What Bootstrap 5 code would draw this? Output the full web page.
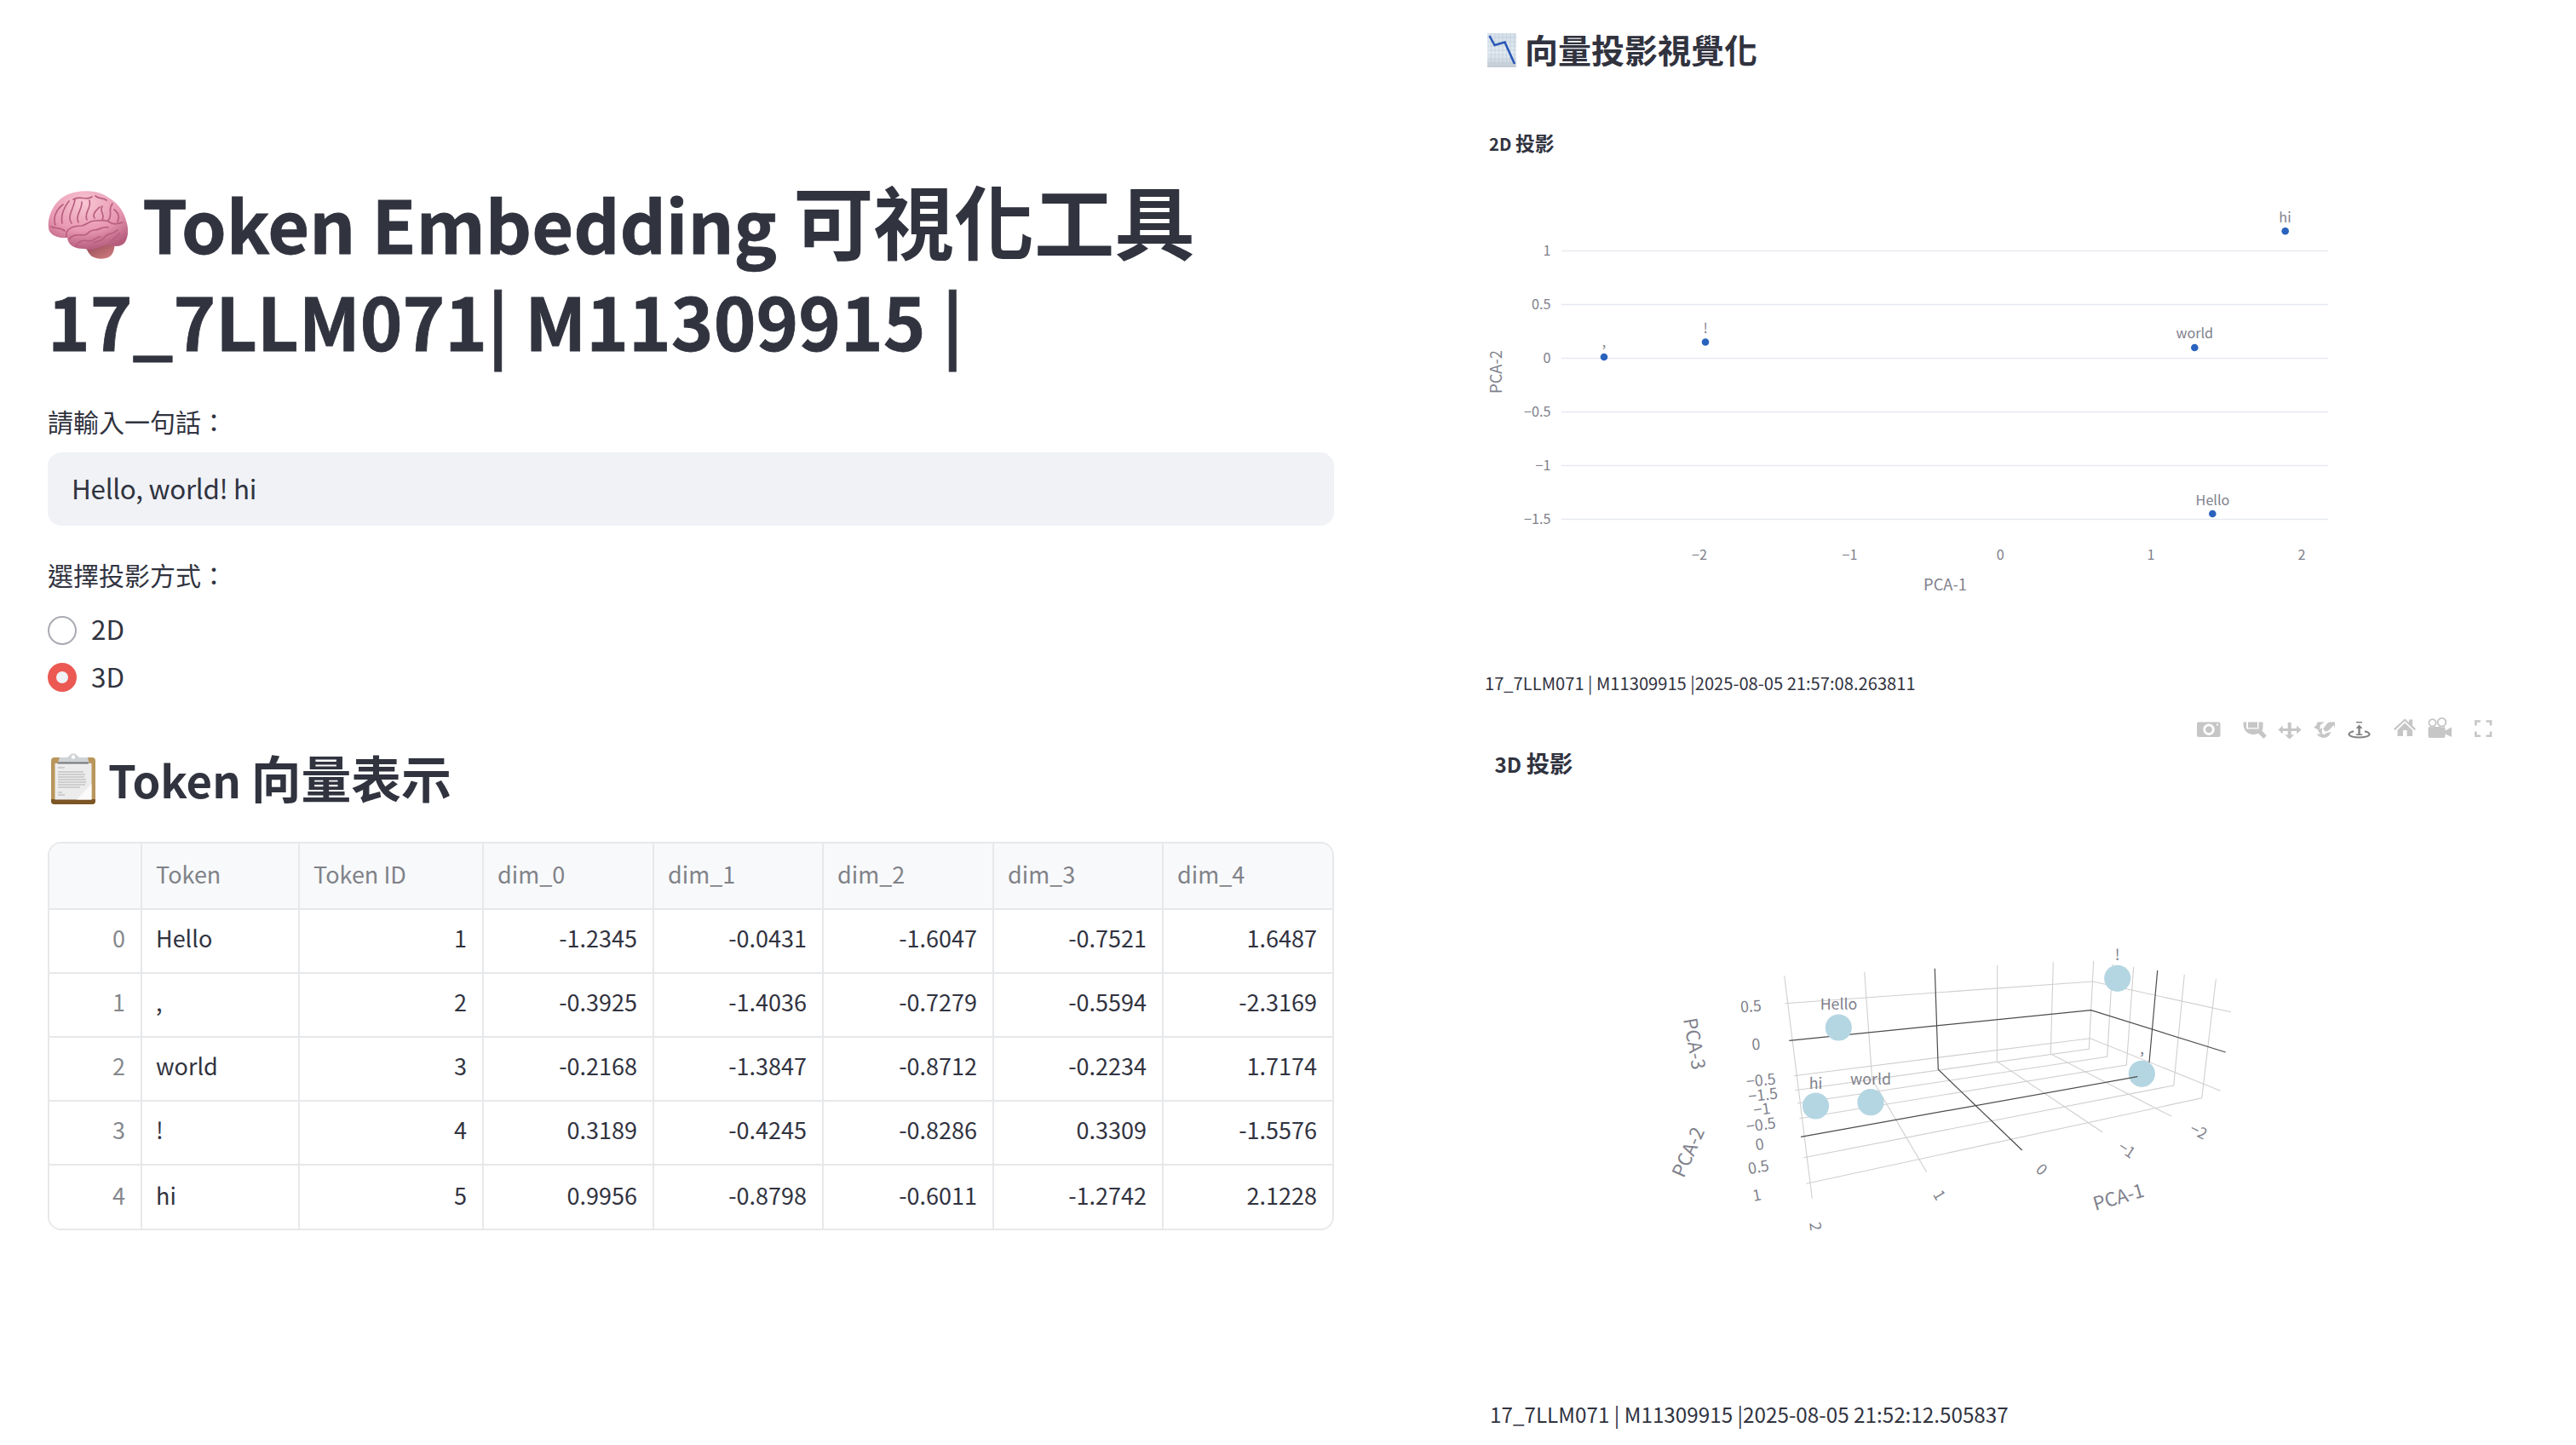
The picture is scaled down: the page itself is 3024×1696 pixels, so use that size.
<!DOCTYPE html>
<html lang="zh-Hant">
<head>
<meta charset="utf-8">
<meta name="viewport" content="width=device-width, initial-scale=1">
<title>Token Embedding 可視化工具</title>
<link href="https://cdn.jsdelivr.net/npm/bootstrap@5.3.0/dist/css/bootstrap.min.css" rel="stylesheet">
<style>
  body { font-family: "Noto Sans CJK TC", "Noto Sans", sans-serif; color: #31333f; background: #fff; overflow: hidden; }
  .page { width: 3024px; height: 1696px; }
  .pane-left { width: 1566px; padding: 204px 0 0 56px; }
  .pane-right { width: 1284px; margin-left: 174px; }
  .zh { font-size: 1.117em; line-height: 0; }
  .app-title { font-size: 84.4px; line-height: 114px; font-weight: 700; margin: 0 0 44px; white-space: nowrap; -webkit-text-stroke: .8px #31333f; }
  .app-title .zh { -webkit-text-stroke: 0; }
  .app-title svg { width: 94px; height: 80px; vertical-align: -6px; margin-right: -2px; }
  .field-label { font-size: 30px; line-height: 36px; margin: 0; display: block; }
  .text-box, .text-box:focus { height: 86px; border: 0; border-radius: 16px; background: #f0f2f6; color: #31333f; font-size: 31.4px; letter-spacing: -.3px; padding: 0 28px 4px; margin-top: 19px; }
  .choice { height: 55.6px; gap: 17px; font-size: 31.4px; line-height: 56px; }
  .choice .form-check-input { width: 34px; height: 34px; margin: 0; border: 2px solid #a9abb2; background-image: none; box-shadow: none; }
  .choice .form-check-input:checked { border: 10.5px solid #ec5953; background-color: #f0f2f6; }
  .choice span { padding-bottom: 3px; line-height: 50px; }
  .section-title { font-size: 52.6px; line-height: 70px; font-weight: 700; margin: 56px 0 0; white-space: nowrap; }
  .section-title svg { width: 60px; height: 60px; vertical-align: -7px; margin-right: -1px; }
  .frame { margin-top: 39px; width: 1510px; border: 2px solid #e7e8ea; border-radius: 16px; overflow: hidden; }
  .frame table { table-layout: fixed; width: 1506px; margin: 0; font-size: 27px; border-collapse: separate; border-spacing: 0; }
  .frame th, .frame td { height: 75.2px; line-height: 40px; padding: 0 18px 7px 16px; vertical-align: middle; font-weight: 400; border: 0 solid #e7e8ea; border-right-width: 2px; border-bottom-width: 2px; color: #31333f; background: #fff; text-align: right; }
  .frame thead th { height: 77.5px; background: #f8f9fb; color: #808288; text-align: left; padding: 0 0 4px 16px; }
  .frame tbody th { color: #85878c; }
  .frame td:nth-child(2) { text-align: left; }
  .frame tr > :last-child { border-right-width: 0; }
  .frame tbody tr:last-child > * { border-bottom-width: 0; height: 73.5px; padding-bottom: 5px; }
  .plots-title { font-size: 39px; line-height: 48px; font-weight: 700; margin: 33px 0 0 6px; gap: 10px; }
  .plots-title svg { margin-top: 3px; }
  .plot { display: block; overflow: visible; }
  .plot text { fill: #7f818c; }
  .plot .ttl { fill: #31333f; font-weight: 700; }
  .stamp { line-height: 36px; margin: 0; white-space: nowrap; }
  .modebar { height: 30px; }
</style>
</head>
<body>
<main class="page d-flex">
  <section class="pane-left flex-shrink-0">
    <h1 class="app-title"><svg viewBox="0 0 94 80"><defs><radialGradient id="br" cx=".45" cy=".2" r=".8"><stop offset="0" stop-color="#f8c6d4"/><stop offset=".6" stop-color="#e898b2"/><stop offset="1" stop-color="#b65c7c"/></radialGradient><linearGradient id="stem" x1="0" y1="0" x2="1" y2="1"><stop offset="0" stop-color="#8f4552"/><stop offset="1" stop-color="#d58083"/></linearGradient></defs><path d="M43 63c3 5 4 10 9 14 5 3 15 4 21 0 5-4 5-10 6-15z" fill="url(#stem)"/><path d="M1 44C-1 31 7 12 22 5 35-1 57-2 70 7c11 6 19 16 22 28 3 8 3 18-1 25-4 6-12 6-20 3-10 3-17 8-28 5-10 0-19-3-20-13C10 56 2 51 1 44z" fill="url(#br)"/><g fill="none" stroke="#b95f80" stroke-width="1.7" stroke-linecap="round"><path d="M22 54c-2-9 7-13 18-13 6-1 8-6 16-6 7 0 12-2 17 2 5 3 8 2 15 0M9 40c-3-9 1-18 9-24M17 38c-2-9 2-19 8-26M28 38c-6-8 3-18 4-28M36 37c-4-9 5-15 4-24M46 34c-4-9 6-13 3-23M55 32c-3-5 2-9 6-13M64 34c4-7-4-9 0-16M71 35c6-7-1-13 5-20M82 36c3-6 0-11-4-14M30 10c8-5 15 2 22-3M56 6c5 4 9 2 13 5M20 47C14 42 9 45 4 42M25 57c5-7 12-5 17-5 6 0 5-6 13-6 7 0 9-5 16-3M33 65c3-6 9-8 15-6 7 1 7-5 14-5M54 61c6-3 9-1 13-7 4-5 10-3 15-8M74 61c1-5 8-6 10-11"/></g></svg> Token Embedding <span class="zh">可視化工具</span><br>17_7LLM071| M11309915 |</h1>

    <label class="field-label" for="sentence">請輸入一句話：</label>
    <input id="sentence" class="form-control text-box" value="Hello, world! hi">

    <span class="field-label" style="margin-top:39px">選擇投影方式：</span>
    <div class="pt-3 mt-1">
      <label class="choice d-flex align-items-center"><input class="form-check-input" type="radio" name="mode"><span>2D</span></label>
      <label class="choice d-flex align-items-center"><input class="form-check-input" type="radio" name="mode" checked><span>3D</span></label>
    </div>

    <h2 class="section-title"><svg viewBox="0 0 60 60"><rect x="4" y="5" width="52" height="55" rx="4" fill="#b9965c"/><path d="M4 54h52v2q0 4-4 4H8q-4 0-4-4z" fill="#7d5526"/><path d="M8.500 12h43v42.500h-43z" fill="#ececec"/><path d="M51.500 36v18.500H34z" fill="#fafafa"/><path d="M12 17h8M12 22h30M12 25h32M12 28h31M12 31h33M12 34h33M12 37h32M12 40h26M12 46h5M12 49h8" stroke="#c3c3c3" stroke-width="1.300"/><path d="M14 5h9l5-4.500h4l5 4.500h10q1 5 2 7H12q1-5 2-7z" fill="#cfd3d6"/><path d="M12 10.500h36v2H12z" fill="#777"/><circle cx="30" cy="4.500" r="2.200" fill="#fff"/></svg> Token <span class="zh">向量表示</span></h2>

    <div class="frame">
      <table class="table">
        <colgroup><col style="width:109px"><col style="width:185px"><col style="width:216px"><col style="width:200px"><col style="width:199px"><col style="width:200px"><col style="width:199px"><col></colgroup>
        <thead><tr><th></th><th>Token</th><th>Token ID</th><th>dim_0</th><th>dim_1</th><th>dim_2</th><th>dim_3</th><th>dim_4</th></tr></thead>
        <tbody>
          <tr><th>0</th><td>Hello</td><td>1</td><td>-1.2345</td><td>-0.0431</td><td>-1.6047</td><td>-0.7521</td><td>1.6487</td></tr>
          <tr><th>1</th><td>,</td><td>2</td><td>-0.3925</td><td>-1.4036</td><td>-0.7279</td><td>-0.5594</td><td>-2.3169</td></tr>
          <tr><th>2</th><td>world</td><td>3</td><td>-0.2168</td><td>-1.3847</td><td>-0.8712</td><td>-0.2234</td><td>1.7174</td></tr>
          <tr><th>3</th><td>!</td><td>4</td><td>0.3189</td><td>-0.4245</td><td>-0.8286</td><td>0.3309</td><td>-1.5576</td></tr>
          <tr><th>4</th><td>hi</td><td>5</td><td>0.9956</td><td>-0.8798</td><td>-0.6011</td><td>-1.2742</td><td>2.1228</td></tr>
        </tbody>
      </table>
    </div>
  </section>

  <section class="pane-right flex-shrink-0">
    <h3 class="plots-title d-flex align-items-center"><svg width="34" height="40" viewBox="0 0 34 40"><defs><linearGradient id="pg" x1="0" y1="0" x2="0" y2="1"><stop offset="0" stop-color="#d5e0e9"/><stop offset=".6" stop-color="#e3ebf1"/><stop offset="1" stop-color="#c3cbd3"/></linearGradient></defs><path d="M0 0h34v40H0z" fill="url(#pg)"/><path d="M4.500 0v40M9 0v40M13.500 0v40M18 0v40M22.500 0v40M27 0v40M31.500 0v40M0 5h34M0 10h34M0 15h34M0 20h34M0 25h34M0 30h34M0 35h34" stroke="#bccbd8" stroke-width=".6"/><path d="M2.500 3l6 11 12-3.500L32 36" fill="none" stroke="#2a56b8" stroke-width="2.600"/></svg><span>向量投影視覺化</span></h3>

    <!-- 2D projection; user units are page pixels -->
    <svg class="plot" width="1284" height="699" viewBox="1740 81 1284 699" font-size="16.200">
      <text class="ttl" x="1748" y="177" font-size="20.200">2D <tspan font-size="22.800">投影</tspan></text>
      <path d="M1833 294.500h900M1833 357.500h900M1833 420.500h900M1833 483.500h900M1833 546.500h900M1833 609.500h900" stroke="#e6e9f0" stroke-width="1.400"/>
      <g text-anchor="end"><text x="1820.500" y="300">1</text><text x="1820.500" y="363">0.5</text><text x="1820.500" y="426">0</text><text x="1820.500" y="489">−0.5</text><text x="1820.500" y="552">−1</text><text x="1820.500" y="615">−1.5</text></g>
      <g text-anchor="middle"><text x="1995" y="656.700">−2</text><text x="2171.500" y="656.700">−1</text><text x="2348.300" y="656.700">0</text><text x="2525" y="656.700">1</text><text x="2702" y="656.700">2</text>
        <text x="2283.500" y="692.500" font-size="18.300">PCA-1</text><text transform="translate(1763 436.500) rotate(-90)" font-size="18.300">PCA-2</text>
        <text x="1883" y="407">,</text><text x="2002" y="391">!</text><text x="2682.500" y="260.700">hi</text><text x="2576.300" y="397.300">world</text><text x="2597.500" y="592.500">Hello</text></g>
      <g fill="#2a63bd"><circle cx="1883" cy="419" r="4.300"/><circle cx="2002" cy="401.500" r="4.300"/><circle cx="2682.700" cy="271.300" r="4.300"/><circle cx="2576.300" cy="408" r="4.300"/><circle cx="2597.300" cy="603" r="4.300"/></g>
    </svg>
    <p class="stamp" style="font-size:20.15px;padding:4px 0 0 3px">17_7LLM071 | M11309915 |2025-08-05 21:57:08.263811</p>

    <div class="modebar d-flex justify-content-end" style="margin-top:20px">
      <svg width="360" height="30" viewBox="2570 840 360 30" style="margin-right:94px" fill="#c6c6c6">
        <path fill-rule="evenodd" d="M2581 847.500h23.500q2 0 2 2V863q0 2-2 2H2581q-2 0-2-2v-13.500q0-2 2-2zM2593 849.500a6.700 6.700 0 1 0 .01 0zM2602 849.500v2h2v-2zM2593 852.200a4 4 0 1 1-.01 0z"/>
        <path fill-rule="evenodd" d="M2633.500 847.500h23v6q0 2-1.200 4l5.500 6-3.500 3.500-6.300-6.200q-4 2-9 1-7.500-2-8.500-10.500zM2637 847.500v8h14.500v-8h-1.500v6.700h-11v-6.700z"/>
        <path d="M2685.700 848h4v7h6.500v-3.500l5.300 5-5.300 5V858h-6.500v4.500h3.500l-5.500 5-5.500-5h3.500V858h-6v3.500l-5.200-5 5.200-5v3.500h6z"/>
        <path d="M2720.500 847.500h8.500l-5 3.200-1 5 3-1.500q-1 6 1 8-5-1-6-6l-5-2.500q3.500-1.500 4.500-6.200zM2725 861.500q3.500 1.500 7-1.500l4-1q-1 7-9 7-5-1-7.500-4.500zM2729.500 858.500l-2.500-3 4.500-6q1.500-2 3.500-2h6v7l-1.500-3.500-3.500 4q-3 3.500-6.500 3.500z"/>
        <g fill="#838383"><path d="M2766 847h7v1.600h-7zM2769.500 850.500l4 4.500h-2.800v6.500h2.500v1.500h-7.400v-1.500h2.500V855h-2.800z"/><path d="M2763 858.200q-6 1.500-5.500 4 2 3.300 12 3.300t12-3.300q.5-2.500-5.500-4" fill="none" stroke="#838383" stroke-width="2.200"/></g>
        <path d="M2823 843.500l5 4.500v-3.500h4v7l4 4-1.500 1.700-11.500-11-11.500 11-1.500-1.700zM2823 848.500l9 8.500v7h-6.500v-7h-4.500v7h-6.500v-7z"/>
        <path fill-rule="evenodd" d="M2855.500 843.300a5 5 0 1 1-.01 0zm0 1.800a3.200 3.200 0 1 0 .01 0zM2866.500 842a5.700 5.700 0 1 1-.01 0zm0 1.800a3.900 3.900 0 1 0 .01 0zM2852.500 853h16q2 0 2 2v2.500l7.500-4V865l-7.500-3.500v2.500q0 2-2 2h-16q-2 0-2-2v-9q0-2 2-2z"/>
        <path d="M2906.300 851.500v-5h5.500M2918.500 846.500h5.500v5M2924 858.500v5.300h-5.500M2911.800 863.800h-5.500v-5.300" fill="none" stroke="#c6c6c6" stroke-width="2.600"/>
      </svg>
    </div>

    <!-- 3D projection; user units are page pixels -->
    <svg class="plot" width="1284" height="770" viewBox="1740 870 1284 770" font-size="17.800">
      <text class="ttl" x="1754.500" y="906.700" font-size="24.300">3D <tspan font-size="27.400">投影</tspan></text>
      <g fill="none" stroke="#cfcfcf" stroke-width="1.100">
        <path d="M2094.700 1145.300L2127.300 1406.700M2188.700 1140.700l9 126 64 109M2344.700 1133l-.4 113 123.700 82.700M2410.300 1129.300l-3 107.700 142 73.300"/>
        <path d="M2457.700 1127.700l-5.400 103.600-345.300 48.400M2480 1131.700l-6.300 108.600L2110 1295M2504.700 1134.700l-8.400 115.300-384 62.700M2564.300 1144l-12.600 130-434.400 84.700M2601.300 1149.300l-16.600 139.400-464.400 100.600"/>
        <path d="M2095.300 1177.700L2456.700 1152 2619 1187.700M2105.700 1262.700l348-44 153 61.600"/>
      </g>
      <g fill="none" stroke="#4c4c4c" stroke-width="1.200">
        <path d="M2271.300 1136.700l4 118.600 98.400 94.700M2532.700 1139l-9.700 108M2100.300 1221.300l354.400-35.600 158 49.300"/>
      </g>
      <g fill="#b4d6e2"><circle cx="2158.300" cy="1206" r="15.600"/><circle cx="2131.500" cy="1298" r="15.600"/><circle cx="2196" cy="1293.700" r="15.600"/><circle cx="2485.700" cy="1148.300" r="15.600"/><circle cx="2514.300" cy="1260.300" r="15.600"/></g>
      <path d="M2509.300 1263.700L2114 1334.300" stroke="#4c4c4c" stroke-width="1.200"/>
      <g text-anchor="middle">
        <text x="2158.500" y="1185">Hello</text><text x="2131.500" y="1278">hi</text><text x="2196" y="1273">world</text><text x="2485.700" y="1127">!</text><text x="2514.500" y="1236.500">,</text>
        <text transform="translate(2055.300 1181) rotate(-4)" y="6.500">0.5</text>
        <text transform="translate(2061.300 1225.700) rotate(-5)" y="6.500">0</text>
        <text transform="translate(2067.300 1267.700) rotate(-6)" y="6.500">−0.5</text>
        <text transform="translate(2069.500 1285) rotate(-7)" y="6.500">−1.5</text>
        <text transform="translate(2068.300 1301.700) rotate(-8)" y="6.500">−1</text>
        <text transform="translate(2067.300 1320) rotate(-8)" y="6.500">−0.5</text>
        <text transform="translate(2065.700 1343) rotate(-9)" y="6.500">0</text>
        <text transform="translate(2064.300 1369.700) rotate(-10)" y="6.500">0.5</text>
        <text transform="translate(2062.300 1402.700) rotate(-11)" y="6.500">1</text>
        <text transform="translate(2131.300 1439.300) rotate(83)" y="6.500">2</text>
        <text transform="translate(2276.700 1402.700) rotate(59)" y="6.500">1</text>
        <text transform="translate(2396.700 1372.700) rotate(43)" y="6.500">0</text>
        <text transform="translate(2496.700 1349.300) rotate(34)" y="6.500">−1</text>
        <text transform="translate(2581 1327.700) rotate(27)" y="6.500">−2</text>
        <g font-size="22"><text transform="translate(2487 1405) rotate(-16)" y="8">PCA-1</text><text transform="translate(1981.700 1352.300) rotate(-66)" y="8">PCA-2</text><text transform="translate(1989.300 1225) rotate(80)" y="8">PCA-3</text></g>
      </g>
    </svg>
    <p class="stamp" style="font-size:24.25px;padding:2px 0 0 9px">17_7LLM071 | M11309915 |2025-08-05 21:52:12.505837</p>
  </section>
</main>
<script src="https://cdn.jsdelivr.net/npm/bootstrap@5.3.0/dist/js/bootstrap.bundle.min.js"></script>
</body>
</html>
